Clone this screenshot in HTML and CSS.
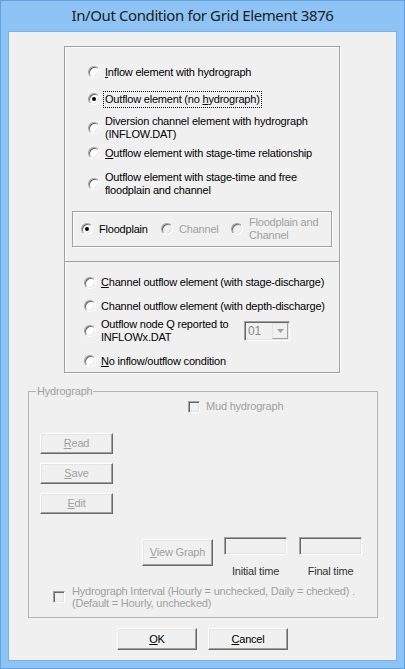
FILE: index.html
```html
<!DOCTYPE html>
<html>
<head>
<meta charset="utf-8">
<link rel="stylesheet" href="styles.css">
</head>
<body>
<div class="window">
  <div class="titlebar">In/Out Condition for Grid Element 3876</div>
  <div class="client">
    <div class="opts">
      <div class="sec1">
        <div class="row r1"><span class="radio"></span><span class="lbl"><u>I</u>nflow element with hydrograph</span></div>
        <div class="row r2"><span class="radio checked"></span><span class="lbl focus">Outflow element (no <u>h</u>ydrograph)</span></div>
        <div class="row r3"><span class="radio"></span><span class="lbl">Diversion channel element with hydrograph<br>(INFLOW.DAT)</span></div>
        <div class="row r4"><span class="radio"></span><span class="lbl"><u>O</u>utflow element with stage-time relationship</span></div>
        <div class="row r5"><span class="radio"></span><span class="lbl">Outflow element with stage-time and free<br>floodplain and channel</span></div>
        <div class="subbox">
          <div class="sopt s1"><span class="radio checked"></span><span class="lbl">Floodplain</span></div>
          <div class="sopt s2 dis"><span class="radio disabled"></span><span class="lbl">Channel</span></div>
          <div class="sopt s3 dis"><span class="radio disabled"></span><span class="lbl">Floodplain and<br>Channel</span></div>
        </div>
      </div>
      <div class="sec2">
        <div class="row q1"><span class="radio"></span><span class="lbl"><u>C</u>hannel outflow element (with stage-discharge)</span></div>
        <div class="row q2"><span class="radio"></span><span class="lbl">Channel outflow element (with depth-discharge)</span></div>
        <div class="row q3"><span class="radio"></span><span class="lbl qlbl">Outflow node Q reported to<br>INFLOWx.DAT</span>
          <div class="combo"><span class="cval">01</span><span class="cbtn"><svg width="7" height="4" viewBox="0 0 7 4"><path d="M0 0H7L3.5 4Z" fill="#a0a0a0"/></svg></span></div>
        </div>
        <div class="row q4"><span class="radio"></span><span class="lbl"><u>N</u>o inflow/outflow condition</span></div>
      </div>
    </div>

    <fieldset class="hydro">
      <legend>Hydrograph</legend>
      <div class="mud"><span class="check"></span><span class="lbl dis">Mud hydrograph</span></div>
      <div class="btncol">
        <div class="btn dis small"><span><u>R</u>ead</span></div>
        <div class="btn dis small"><span><u>S</u>ave</span></div>
        <div class="btn dis small"><span><u>E</u>dit</span></div>
      </div>
      <div class="graphrow">
        <div class="btn dis view"><span><u>V</u>iew Graph</span></div>
        <div class="tcol first"><div class="tbox"></div><div class="tlabel">Initial time</div></div>
        <div class="tcol"><div class="tbox"></div><div class="tlabel">Final time</div></div>
      </div>
      <div class="interval"><span class="check"></span><span class="lbl dis ilbl">Hydrograph Interval (Hourly = unchecked, Daily = checked) .<br>(Default = Hourly, unchecked)</span></div>
    </fieldset>

    <div class="bottom">
      <div class="btn big"><span><u>O</u>K</span></div>
      <div class="btn big"><span><u>C</u>ancel</span></div>
    </div>
  </div>
</div>
</body>
</html>
```

FILE: styles.css
```css
* { box-sizing: border-box; }
html, body { margin: 0; background: #ffffff; }
body {
  font-family: "Liberation Sans", Arial, sans-serif;
  font-size: 11px;
  line-height: 13px;
  letter-spacing: -0.2px;
  color: #000;
}
.window {
  width: 405px;
  height: 669px;
  background: #8ec4f5;
  border: 1px solid #62a2de;
  display: flex;
  flex-direction: column;
}
.titlebar {
  height: 30px;
  display: flex;
  align-items: center;
  justify-content: center;
  padding-bottom: 2px;
  font-family: "Noto Sans", "Open Sans", sans-serif;
  font-size: 15px;
  letter-spacing: -0.4px;
  color: #1b1b1b;
}
.client {
  flex: 1;
  margin: 0 7px 7px;
  background: #f0f0f0;
  border: 1px solid #7db0e2;
  display: flex;
  flex-direction: column;
}
.lbl { white-space: nowrap; }
u { text-decoration: underline; text-underline-offset: 1px; }

/* option groups */
.opts {
  margin: 14px 0 0 55px;
  width: 276px;
  border: 1px solid #a0a0a0;
  box-shadow: 1px 1px 0 #fff, inset 1px 1px 0 #fff;
}
.sec1 { padding: 12px 0 14px 0; }
.sec2 {
  height: 111px;
  border-top: 1px solid #a0a0a0;
  padding-top: 9px;
}
.row { display: flex; align-items: center; }
.sec1 .row { padding-left: 23px; }
.sec2 .row { padding-left: 19px; }
.row .radio { margin-right: 5px; }
.r1 { height: 26px; }
.r2 { height: 28px; }
.r3 { height: 30px; }
.r4 { height: 20px; }
.r5 { height: 42px; }
.q1 { height: 23px; }
.q2 { height: 24px; }
.q3 { height: 26px; }
.q4 { height: 20px; margin-top: 7px; }
.qlbl { width: 143px; }

.focus {
  outline: 1px dotted #000;
  outline-offset: 1px;
}

.radio {
  flex: none;
  position: relative;
  width: 12px;
  height: 12px;
  border-radius: 50%;
  background: #fff;
  border: 1px solid;
  border-color: #a0a0a0 #fff #fff #a0a0a0;
  box-shadow: inset 1px 1px 0 #696969, inset -1px -1px 0 #e3e3e3;
}
.radio.checked::after {
  content: "";
  position: absolute;
  left: 3px;
  top: 3px;
  width: 4px;
  height: 4px;
  border-radius: 50%;
  background: #000;
}
.radio.disabled { background: #f0f0f0; }

.subbox {
  margin: 6px 0 0 7px;
  width: 260px;
  height: 36px;
  border: 1px solid #a0a0a0;
  box-shadow: 1px 1px 0 #fff, inset 1px 1px 0 #fff;
  display: flex;
  align-items: center;
  padding-left: 8px;
}
.sopt { display: flex; align-items: center; gap: 6px; }
.s1 { width: 80px; }
.s2 { width: 70px; }
.dis { color: #a0a0a0; }

.combo {
  width: 46px;
  height: 20px;
  display: flex;
  align-items: center;
  justify-content: space-between;
  padding: 1px 1px 1px 3px;
  background: #f0f0f0;
  border: 1px solid;
  border-color: #a0a0a0 #fff #fff #a0a0a0;
  box-shadow: inset 1px 1px 0 #696969, inset -1px -1px 0 #e3e3e3;
  color: #8a8a8a;
  font-size: 12px;
}
.cbtn {
  width: 16px;
  height: 16px;
  display: flex;
  align-items: center;
  justify-content: center;
  background: #f0f0f0;
  border: 1px solid;
  border-color: #e3e3e3 #a0a0a0 #a0a0a0 #e3e3e3;
}

/* hydrograph group */
.hydro {
  margin: 12px 0 0 19px;
  width: 350px;
  min-width: 0;
  padding: 0 0 8px 0;
  border: 1px solid #b4b4b4;
}
.hydro legend {
  margin-left: 7px;
  padding: 0 1px;
  color: #a0a0a0;
  line-height: 13px;
}
.check {
  flex: none;
  width: 12px;
  height: 12px;
  background: #f0f0f0;
  border: 1px solid;
  border-color: #a0a0a0 #fff #fff #a0a0a0;
  box-shadow: inset 1px 1px 0 #696969, inset -1px -1px 0 #e3e3e3;
}
.mud {
  display: flex;
  align-items: center;
  gap: 6px;
  height: 13px;
  margin: 2px 0 0 159px;
}
.btncol {
  display: flex;
  flex-direction: column;
  gap: 9px;
  margin: 20px 0 0 11px;
}
.btn {
  display: flex;
  align-items: center;
  justify-content: center;
  background: #f0f0f0;
  border: 1px solid;
  border-color: #fff #696969 #696969 #fff;
  box-shadow: inset -1px -1px 0 #a0a0a0, inset 1px 1px 0 #e3e3e3;
  white-space: nowrap;
}
.btn.small { width: 73px; height: 21px; }
.btn.view { width: 71px; height: 27px; margin-top: 2px; }
.btn.big { width: 80px; height: 22px; }
.graphrow {
  display: flex;
  align-items: flex-start;
  margin: 23px 0 0 113px;
}
.tcol { width: 63px; margin-left: 12px; }
.tcol.first { margin-left: 11px; }
.tbox {
  height: 18px;
  background: #f0f0f0;
  border: 1px solid;
  border-color: #a0a0a0 #fff #fff #a0a0a0;
  box-shadow: inset 1px 1px 0 #696969, inset -1px -1px 0 #e3e3e3;
}
.tlabel {
  margin-top: 10px;
  text-align: center;
  white-space: nowrap;
  color: #333;
}
.interval {
  display: flex;
  align-items: center;
  gap: 7px;
  margin: 7px 0 0 24px;
}
.ilbl { line-height: 12px; }

.bottom {
  display: flex;
  justify-content: center;
  gap: 11px;
  margin-top: 10px;
}
```
